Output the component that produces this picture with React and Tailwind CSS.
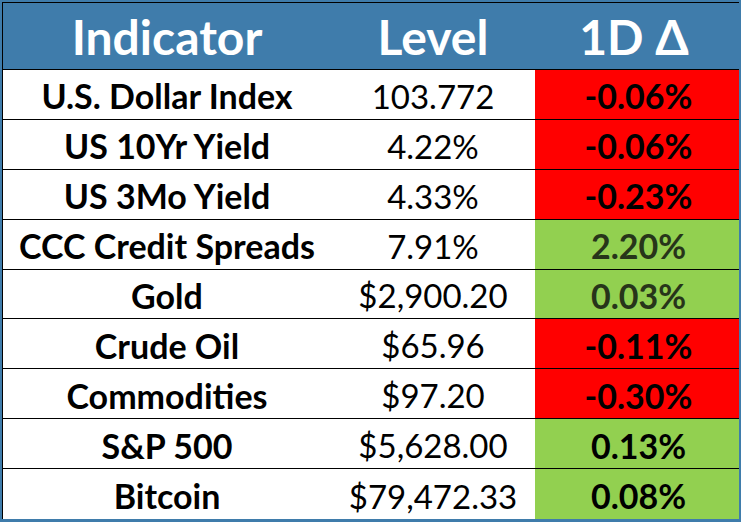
const rows = [
  { name: 'U.S. Dollar Index', level: '103.772', change: '-0.06%', up: false },
  { name: 'US 10Yr Yield', level: '4.22%', change: '-0.06%', up: false },
  { name: 'US 3Mo Yield', level: '4.33%', change: '-0.23%', up: false },
  { name: 'CCC Credit Spreads', level: '7.91%', change: '2.20%', up: true, muted: true },
  { name: 'Gold', level: '$2,900.20', change: '0.03%', up: true, muted: true },
  { name: 'Crude Oil', level: '$65.96', change: '-0.11%', up: false },
  { name: 'Commodities', level: '$97.20', change: '-0.30%', up: false },
  { name: 'S&P 500', level: '$5,628.00', change: '0.13%', up: true },
  { name: 'Bitcoin', level: '$79,472.33', change: '0.08%', up: true },
];

export default function App() {
  return (
    <div className="w-[741px] h-[522px] bg-[#3f7cab] pt-[2px] px-[2px] pb-[3px] font-['Lato',sans-serif]">
      <div className="h-full border-l border-t border-black bg-white flex flex-col">
        {/* header */}
        <div className="grid grid-cols-[328px_204px_204px] h-[67px] border-b border-black bg-[#3f7cab] text-white font-bold text-[48px] leading-none">
          <div className="flex items-center justify-center pt-[2px]">Indicator</div>
          <div className="flex items-center justify-center pt-[2px]">Level</div>
          <div className="flex items-center justify-center pt-[2px] pr-[6px]">1D Δ</div>
        </div>

        {rows.map((r, i) => (
          <div
            key={r.name}
            className={`grid grid-cols-[328px_204px_204px] h-[50px] leading-none ${i < rows.length - 1 ? 'border-b border-black' : ''}`}
          >
            <div className="flex items-center justify-center pt-[4px] font-bold text-black text-[34px]">{r.name}</div>
            <div className="flex items-center justify-center pt-[4px] text-black text-[33px]">{r.level}</div>
            <div
              className={`flex items-center justify-center pt-[4px] pl-[3px] font-bold text-[34px] ${r.up ? 'bg-[#92d050]' : 'bg-[#ff0000]'} ${r.muted ? 'text-[#27351a]' : 'text-black'}`}
            >
              {r.change}
            </div>
          </div>
        ))}
      </div>
    </div>
  );
}
